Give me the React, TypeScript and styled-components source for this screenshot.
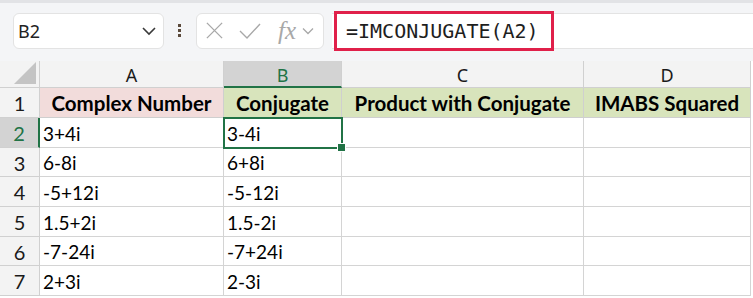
import styled, { createGlobalStyle } from 'styled-components'

// 資料
const columns = [
  { key: 'A', width: 184 },
  { key: 'B', width: 118 },
  { key: 'C', width: 242 },
  { key: 'D', width: 167 },
]

const headers = ['Complex Number', 'Conjugate', 'Product with Conjugate', 'IMABS Squared']

const rows = [
  { id: 2, a: '3+4i', b: '3-4i', h: 30 },
  { id: 3, a: '6-8i', b: '6+8i', h: 29 },
  { id: 4, a: '-5+12i', b: '-5-12i', h: 30 },
  { id: 5, a: '1.5+2i', b: '1.5-2i', h: 30 },
  { id: 6, a: '-7-24i', b: '-7+24i', h: 29 },
  { id: 7, a: '2+3i', b: '2-3i', h: 30 },
]

const GREEN = '#217346'

const App = () => {
  return (
    <>
      <GlobalStyle />
      <Toolbar>
        <NameBox>
          <span>B2</span>
          <svg width="16" height="10" viewBox="0 0 16 10">
            <path d="M2 2 L8 8 L14 2" fill="none" stroke="#3a3a3a" strokeWidth="1.6" />
          </svg>
        </NameBox>
        <Dots>
          <i />
          <i />
          <i />
        </Dots>
        <FxBox>
          <svg width="19" height="19" viewBox="0 0 20 20">
            <path d="M2 2 L18 18 M18 2 L2 18" stroke="#a8a8a8" strokeWidth="1.4" />
          </svg>
          <svg width="22" height="18" viewBox="0 0 22 18">
            <path d="M1 9 L8 16 L21 2" fill="none" stroke="#a8a8a8" strokeWidth="1.4" />
          </svg>
          <FxText>fx</FxText>
          <svg width="12" height="8" viewBox="0 0 12 8">
            <path d="M1 1.5 L6 6.5 L11 1.5" fill="none" stroke="#a8a8a8" strokeWidth="1.3" />
          </svg>
        </FxBox>
        <FormulaBar>
          <Highlight>=IMCONJUGATE(A2)</Highlight>
        </FormulaBar>
      </Toolbar>

      <Sheet>
        <Corner>
          <svg width="22" height="22" viewBox="0 0 22 22">
            <path d="M22 0 L22 22 L0 22 Z" fill="#c4c4c4" />
          </svg>
        </Corner>
        {columns.map((c) => (
          <ColHead key={c.key} $active={c.key === 'B'}>
            {c.key}
          </ColHead>
        ))}

        <RowHead $h={30}>1</RowHead>
        {headers.map((t, i) => (
          <HeadCell key={t} $pink={i === 0}>
            {t}
          </HeadCell>
        ))}

        {rows.map((r) => (
          <Row key={r.id}>
            <RowHead $h={r.h} $active={r.id === 2}>
              {r.id}
            </RowHead>
            <Cell>{r.a}</Cell>
            <Cell $selected={r.id === 2}>
              {r.b}
              {r.id === 2 && <Handle />}
            </Cell>
            <Cell />
            <Cell />
          </Row>
        ))}
      </Sheet>
    </>
  )
}

// 樣式
const GlobalStyle = createGlobalStyle`
  html, body {
    margin: 0;
    padding: 0;
    background: #ffffff;
    width: 753px;
    height: 298px;
    overflow: hidden;
  }
`

const Toolbar = styled.div`
  display: flex;
  align-items: center;
  height: 61px;
  box-sizing: border-box;
  padding: 0 0 0 13px;
  background: #f4f5f7;
  border-top: 3px solid #e2e3e6;
`

const NameBox = styled.div`
  display: flex;
  align-items: center;
  justify-content: space-between;
  box-sizing: border-box;
  width: 151px;
  height: 36px;
  margin-top: -3px;
  padding: 0 6px 0 4px;
  background: #fff;
  border: 1px solid #e3e3e3;
  border-radius: 6px;
  font-family: 'Noto Sans', 'Open Sans', sans-serif;
  font-size: 18px;
  color: #222;
`

const Dots = styled.div`
  display: flex;
  flex-direction: column;
  gap: 2px;
  margin: -3px 15px 0 14px;

  i {
    display: block;
    width: 3px;
    height: 3px;
    background: #5b4a3c;
  }
`

const FxBox = styled.div`
  display: flex;
  align-items: center;
  box-sizing: border-box;
  width: 128px;
  height: 36px;
  margin-top: -3px;
  padding: 0 5px 0 8px;
  gap: 13px;
  background: #fff;
  border: 1px solid #e3e3e3;
  border-radius: 6px;

  svg:nth-child(2) {
    margin-left: 2px;
  }
`

const FxText = styled.span`
  font-family: 'Liberation Serif', serif;
  font-style: italic;
  font-size: 25px;
  line-height: 1;
  color: #a8a8a8;
  margin-right: -7px;
  margin-left: 4px;
`

const FormulaBar = styled.div`
  flex: 1;
  display: flex;
  align-items: center;
  height: 36px;
  margin: -3px 0 0 8px;
  background: #fff;
  border-top: 1px solid #e3e3e3;
  border-bottom: 1px solid #e3e3e3;
  box-sizing: border-box;
`

const Highlight = styled.span`
  display: inline-flex;
  align-items: center;
  box-sizing: border-box;
  height: 40px;
  width: 220px;
  margin-left: 2px;
  padding-left: 9px;
  border: 3px solid #e0204a;
  font-family: 'DejaVu Sans Mono', 'Liberation Mono', monospace;
  font-size: 20px;
  color: #1e1e1e;
`

const Sheet = styled.div`
  display: grid;
  grid-template-columns: 40px 184px 118px 242px 167px;
  font-family: Lato, 'Open Sans', sans-serif;
  color: #000;
`

const Row = styled.div`
  display: contents;
`

const Corner = styled.div`
  height: 27px;
  box-sizing: border-box;
  background: #f3f3f3;
  border-right: 1px solid #d0d0d0;
  border-bottom: 1px solid #d0d0d0;
  display: flex;
  align-items: flex-end;
  justify-content: flex-end;
  padding: 0 3px 3px 0;
`

const ColHead = styled.div<{ $active?: boolean }>`
  height: 27px;
  box-sizing: border-box;
  display: flex;
  align-items: center;
  justify-content: center;
  background: ${(p) => (p.$active ? '#d3d3d3' : '#f3f3f3')};
  color: ${(p) => (p.$active ? GREEN : '#1a1a1a')};
  border-right: 1px solid #d0d0d0;
  border-bottom: ${(p) => (p.$active ? `2px solid ${GREEN}` : '1px solid #d0d0d0')};
  font-family: 'Noto Sans', 'Open Sans', sans-serif;
  font-size: 18px;
  padding-top: 2px;
`

const RowHead = styled.div<{ $h: number; $active?: boolean }>`
  height: ${(p) => p.$h}px;
  box-sizing: border-box;
  display: flex;
  align-items: center;
  justify-content: center;
  background: ${(p) => (p.$active ? '#d3d3d3' : '#f3f3f3')};
  color: ${(p) => (p.$active ? GREEN : '#1a1a1a')};
  border-right: ${(p) => (p.$active ? `2px solid ${GREEN}` : '1px solid #d0d0d0')};
  border-bottom: 1px solid #d0d0d0;
  font-size: 20px;
  padding-top: 1px;
`

const HeadCell = styled.div<{ $pink?: boolean }>`
  box-sizing: border-box;
  display: flex;
  align-items: center;
  justify-content: center;
  background: ${(p) => (p.$pink ? '#f2dcdb' : '#d8e4bc')};
  border-right: 1px solid #cfcfcf;
  border-bottom: 1px solid #cfcfcf;
  font-weight: 700;
  font-size: 20.5px;
  white-space: nowrap;
  padding-top: 1px;
`

const Cell = styled.div<{ $selected?: boolean }>`
  position: relative;
  box-sizing: border-box;
  display: flex;
  align-items: center;
  padding-left: 3px;
  border-right: 1px solid #d4d4d4;
  border-bottom: 1px solid #d4d4d4;
  font-size: 19px;
  white-space: nowrap;
  padding-top: 1px;

  ${(p) =>
    p.$selected &&
    `
    outline: 2px solid ${GREEN};
    outline-offset: -1px;
    z-index: 1;
  `}
`

const Handle = styled.span`
  position: absolute;
  right: -5px;
  bottom: -5px;
  width: 7px;
  height: 7px;
  background: ${GREEN};
  border: 1px solid #fff;
`

export default App
